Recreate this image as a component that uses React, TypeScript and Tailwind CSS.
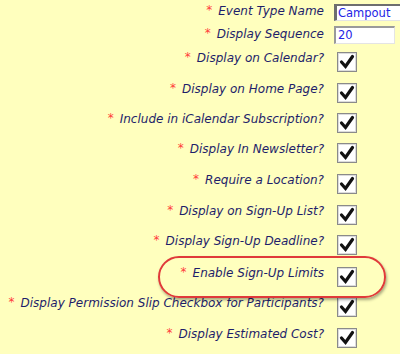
import React from "react";

const rows: { label: string; h: string }[] = [
  { label: "Display on Calendar?", h: "h-[31px]" },
  { label: "Display on Home Page?", h: "h-[30px]" },
  { label: "Include in iCalendar Subscription?", h: "h-[30px]" },
  { label: "Display In Newsletter?", h: "h-[31px]" },
  { label: "Require a Location?", h: "h-[31px]" },
  { label: "Display on Sign-Up List?", h: "h-[30px]" },
  { label: "Display Sign-Up Deadline?", h: "h-[32px]" },
  { label: "Enable Sign-Up Limits", h: "h-[30px]" },
  { label: "Display Permission Slip Checkbox for Participants?", h: "h-[31px]" },
  { label: "Display Estimated Cost?", h: "h-[32px]" },
];

function Label({ text }: { text: string }) {
  return (
    <div className="w-[324px] shrink-0 text-right whitespace-nowrap italic text-[12px] leading-[16px] text-[#1e1e6a]">
      <span className="text-[#ff3b3b] not-italic mr-[6px] text-[12px] relative top-[-1px]">*</span>
      {text}
    </div>
  );
}

function Check() {
  return (
    <div className="w-[20px] h-[20px] border border-[#8a8a8a] bg-white flex items-center justify-center">
      <div className="w-[18px] h-[18px] border border-[#dcdcdc] flex items-center justify-center">
        <svg width="16" height="16" viewBox="0 0 16 16">
          <path d="M2.5 8 L6.5 12.5 L13.5 2.5" fill="none" stroke="#111" strokeWidth="3.2" strokeLinecap="round" strokeLinejoin="miter" />
        </svg>
      </div>
    </div>
  );
}

export default function App() {
  return (
    <div
      className="relative w-[400px] h-[354px] bg-[#ffffbe] overflow-hidden"
      style={{ fontFamily: '"DejaVu Sans", Verdana, sans-serif' }}
    >
      <div className="flex h-[23px] pt-[3px]">
        <Label text="Event Type Name" />
        <div className="ml-[10px] mt-[1px] h-[17px] w-[80px] shrink-0 bg-white border-t-2 border-l-[3px] border-t-[#6e6e6e] border-l-[#6e6e6e] border-b border-r border-b-[#e4e4e4] border-r-[#e4e4e4] text-[11.5px] leading-[14px] text-[#2424e6] pl-[1px]">
          Campout
        </div>
      </div>
      <div className="flex h-[23px] pt-[3px]">
        <Label text="Display Sequence" />
        <div className="ml-[10px] h-[18px] w-[61px] shrink-0 bg-white border-t-2 border-l-2 border-t-[#9a9a9a] border-l-[#9a9a9a] border-b border-r border-b-[#e4e4e4] border-r-[#e4e4e4] text-[11.5px] leading-[15px] text-[#2424e6] pl-[2px]">
          20
        </div>
      </div>
      {rows.map((r) => (
        <div key={r.label} className={`flex ${r.h}`}>
          <div className="pt-[4px]">
            <Label text={r.label} />
          </div>
          <div className="ml-[13px] mt-[6px]">
            <Check />
          </div>
        </div>
      ))}
      <div className="absolute left-[158px] top-[256px] w-[228px] h-[42px] rounded-[21px] border-2 border-[#e03a3a] shadow-[1px_2px_3px_rgba(0,0,0,0.35)]" />
    </div>
  );
}
